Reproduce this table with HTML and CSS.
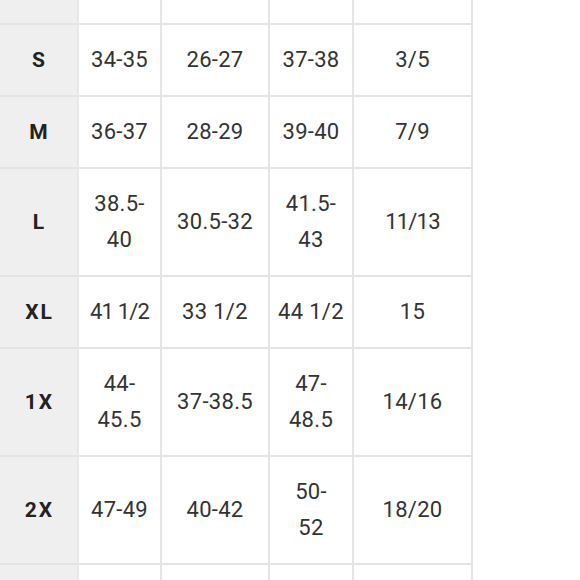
FILE: index.html
```html
<!DOCTYPE html>
<html>
<head>
<meta charset="utf-8">
<link rel="stylesheet" href="styles.css">
</head>
<body>
<table class="chart">
  <colgroup>
    <col class="c0"><col class="c1"><col class="c2"><col class="c3"><col class="c4">
  </colgroup>
  <tr class="top"><td class="size"></td><td></td><td></td><td></td><td></td></tr>
  <tr><td class="size">S</td><td>34-35</td><td>26-27</td><td>37-38</td><td>3/5</td></tr>
  <tr><td class="size">M</td><td>36-37</td><td>28-29</td><td>39-40</td><td>7/9</td></tr>
  <tr><td class="size">L</td><td>38.5-<br>40</td><td>30.5-32</td><td>41.5-<br>43</td><td class="ones">11/13</td></tr>
  <tr><td class="size">XL</td><td class="ones">41 1/2</td><td>33 1/2</td><td>44 1/2</td><td>15</td></tr>
  <tr><td class="size">1X</td><td>44-<br>45.5</td><td>37-38.5</td><td>47-<br>48.5</td><td>14/16</td></tr>
  <tr><td class="size">2X</td><td>47-49</td><td>40-42</td><td>50-<br>52</td><td>18/20</td></tr>
  <tr><td class="size">&nbsp;</td><td>&nbsp;</td><td>&nbsp;</td><td>&nbsp;</td><td>&nbsp;</td></tr>
</table>
</body>
</html>
```
FILE: styles.css
```css
html, body {
  margin: 0;
  padding: 0;
  background: #ffffff;
  overflow: hidden;
}

.chart {
  border-collapse: separate;
  border-spacing: 0;
  table-layout: fixed;
  width: 473px;
  font-family: Roboto, "Liberation Sans", sans-serif;
  color: #333333;
}

.c0 { width: 79px; }
.c1 { width: 83px; }
.c2 { width: 108px; }
.c3 { width: 84px; }
.c4 { width: 119px; }

.chart td {
  box-sizing: border-box;
  border-right: 2px solid #e4e4e4;
  border-bottom: 2px solid #e4e4e4;
  padding: 17px 4px;
  text-align: center;
  vertical-align: middle;
  font-size: 22px;
  line-height: 36px;
  letter-spacing: 0.3px;
}

.chart .top td {
  height: 25px;
  padding: 0;
}

.chart td.ones {
  letter-spacing: -0.8px;
}

.chart td.size {
  background: #efefef;
  border-right-color: #e9e9e9;
  font-size: 21px;
  font-weight: 700;
  letter-spacing: 2px;
  color: #222222;
  padding-left: 6px;
}
```
